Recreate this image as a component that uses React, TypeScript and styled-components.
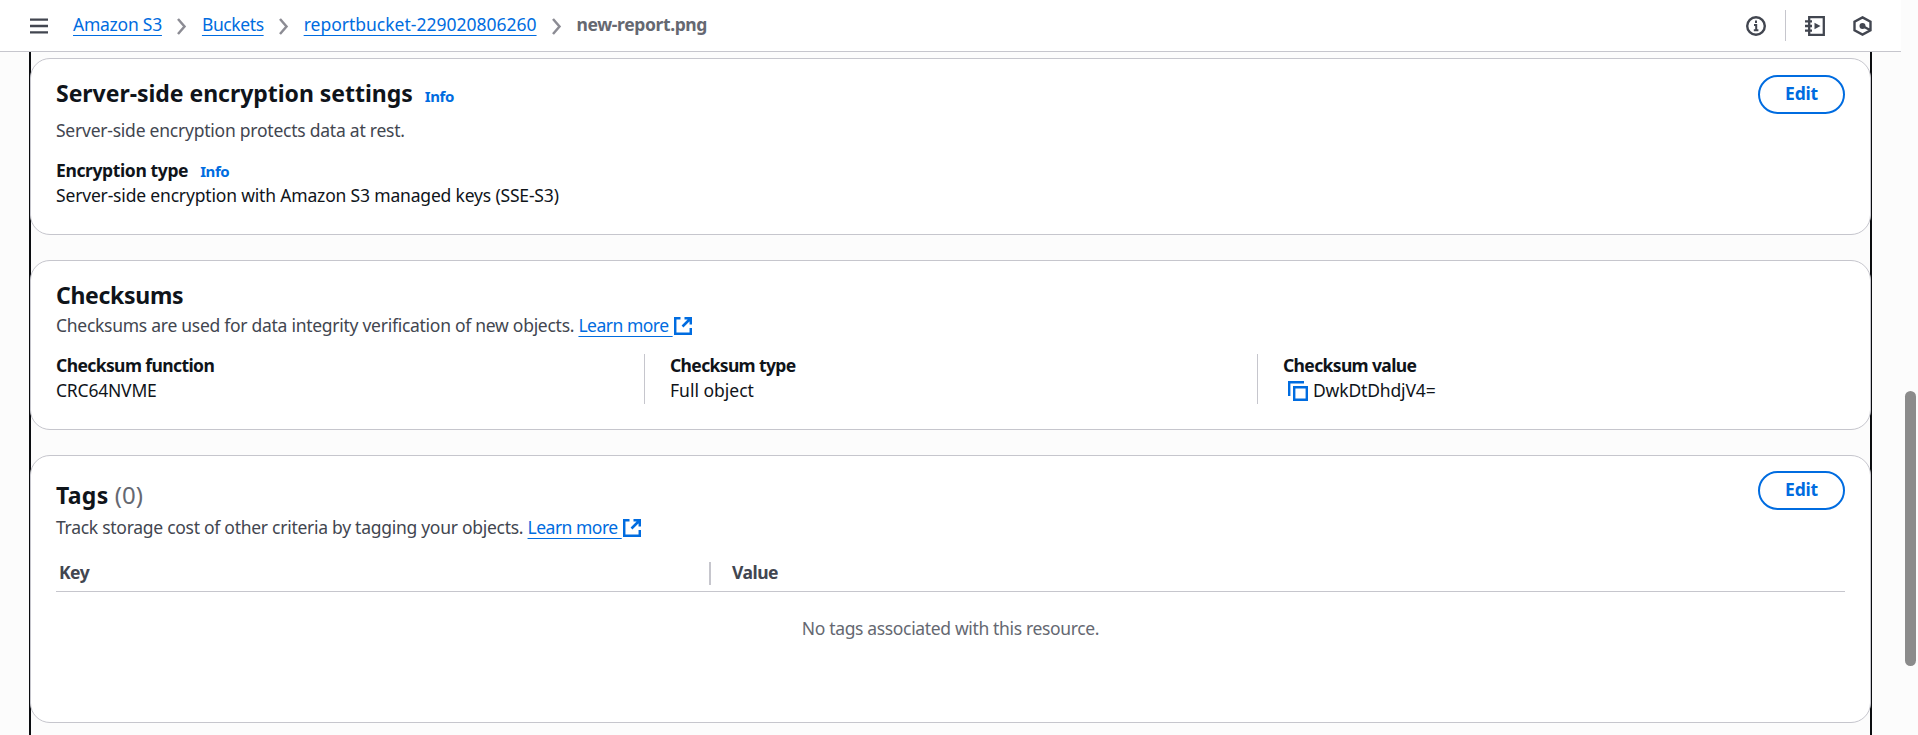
import React from 'react';
import styled, { createGlobalStyle, css } from 'styled-components';

const color = {
  text: '#0f141a',
  secondary: '#424650',
  muted: '#656871',
  link: '#006ce0',
  border: '#c6c6cd',
  page: '#fcfcfc',
};

const GlobalStyle = createGlobalStyle`
  * { box-sizing: border-box; }
  body {
    margin: 0;
    background: ${color.page};
    color: ${color.text};
    font-family: 'Noto Sans', 'Open Sans', sans-serif;
    font-size: 17.5px;
    line-height: 25px;
    overflow: hidden;
  }
`;

const Page = styled.div`
  display: flex;
  height: 735px;
  overflow: hidden;
`;

const Main = styled.div`
  width: 1901px;
  display: flex;
  flex-direction: column;
`;

const ScrollTrack = styled.div`
  width: 17px;
  padding: 391px 2px 0 4px;
`;

const ScrollThumb = styled.div`
  height: 275px;
  border-radius: 6px;
  background: #8b8b8b;
`;

const TopBar = styled.header`
  flex: none;
  height: 52px;
  display: flex;
  align-items: center;
  padding: 0 29px 0 30px;
  background: #fff;
  border-bottom: 1px solid ${color.border};
`;

const MenuIcon = styled.svg`
  flex: none;
  width: 18px;
  height: 20px;
  margin-top: 1px;
`;

const Crumbs = styled.nav`
  display: flex;
  align-items: center;
  margin-left: 25px;
  padding-bottom: 2px;
  flex: 1;
`;

const linkStyle = css`
  color: ${color.link};
  text-decoration: underline;
  text-decoration-thickness: 1px;
  text-underline-offset: 4px;
`;

const Fit = styled.span<{ $ls?: number }>`
  letter-spacing: ${(p) => p.$ls ?? 0}px;
  white-space: nowrap;
`;

const CrumbLink = styled(Fit).attrs({ as: 'a' })`
  ${linkStyle}
`;

const CrumbCurrent = styled(Fit)`
  color: ${color.muted};
  font-weight: 700;
`;

const Chevron = styled.svg`
  flex: none;
  width: 20px;
  height: 24px;
  margin: 2px 10px 0;
`;

const Tools = styled.div`
  display: flex;
  align-items: center;
  color: ${color.secondary};
  svg { margin-top: 1px; }
`;

const Separator = styled.div`
  width: 1px;
  height: 31px;
  margin: 0 19px;
  background: ${color.border};
`;

const HexagonIcon = styled.svg`
  width: 19px;
  height: 20px;
  margin-left: 28px;
`;

const Frame = styled.main`
  flex: 1;
  margin: 0 29px;
  padding: 6px 0 0;
  border: solid #0b0d10;
  border-width: 0 2px;
`;

const Card = styled.section<{ $height: number; $top: number }>`
  height: ${(p) => p.$height}px;
  margin: 0 -1px 25px;
  padding: ${(p) => p.$top}px 25px 0;
  border: 1px solid ${color.border};
  border-radius: 20px;
  background: #fff;
`;

const HeaderRow = styled.div`
  display: flex;
  justify-content: space-between;
  align-items: flex-start;
`;

const TitleBlock = styled.div<{ $top?: number }>`
  padding-top: ${(p) => p.$top ?? 0}px;
`;

const Title = styled.h2`
  margin: 0;
  font-size: 23px;
  line-height: 28px;
  height: 28px;
  font-weight: 700;
  white-space: nowrap;
`;

const Count = styled(Fit)`
  font-size: 24px;
  font-weight: 400;
  color: ${color.muted};
`;

const Info = styled.a`
  margin-left: 12px;
  font-size: 15px;
  line-height: 20px;
  font-weight: 700;
  letter-spacing: -0.4px;
  color: ${color.link};
`;

const Description = styled.p<{ $top: number }>`
  margin: ${(p) => p.$top}px 0 0;
  color: ${color.secondary};
  white-space: nowrap;
`;

const LearnMore = styled(Fit).attrs({ as: 'a', $ls: -0.5 })`
  ${linkStyle}
  svg {
    margin-left: 1px;
    vertical-align: -3px;
  }
`;

const EditButton = styled.button`
  width: 87px;
  height: 39px;
  padding: 0 0 2px;
  border: 2px solid ${color.link};
  border-radius: 20px;
  background: #fff;
  color: ${color.link};
  font: 700 17.5px/25px 'Noto Sans', sans-serif;
  letter-spacing: -0.2px;
`;

const Label = styled.div`
  font-weight: 700;
`;

const Field = styled.div`
  margin-top: 15px;
`;

const Columns = styled.div`
  display: grid;
  grid-template-columns: 588px 613px 1fr;
  height: 50px;
  margin-top: 16px;
`;

const Column = styled.div<{ $divided?: boolean }>`
  ${Label} { margin-top: -1px; }
  ${(p) => p.$divided && css`
    border-left: 1px solid ${color.border};
    padding-left: 25px;
  `}
`;

const CopyValue = styled.div`
  display: flex;
  align-items: center;
  gap: 5px;
  padding-left: 5px;
  svg { margin-top: 1px; }
`;

const TableHead = styled.div`
  display: grid;
  grid-template-columns: 655px 1fr;
  height: 39px;
  padding-top: 9px;
  margin-top: 13px;
  border-bottom: 1px solid ${color.border};
  color: ${color.secondary};
  font-weight: 700;
  letter-spacing: -0.5px;
`;

const HeadCell = styled.div<{ $divided?: boolean }>`
  padding-left: 3px;
  height: 23px;
  line-height: 21px;
  ${(p) => p.$divided && css`
    margin-left: -2px;
    padding-left: 21px;
    border-left: 2px solid ${color.border};
  `}
`;

const Empty = styled.div`
  margin-top: 24px;
  text-align: center;
  color: ${color.muted};
`;

const CrumbSeparator = () => (
  <Chevron viewBox="0 0 20 24" fill="none" stroke="#8c8c94" strokeWidth="2.5">
    <path d="M6 5l6.500 7.500L6 20" />
  </Chevron>
);

const ExternalIcon = () => (
  <svg width="18" height="18" viewBox="0 0 18 18" fill="none" stroke="currentColor" strokeWidth="2.5">
    <path d="M6.500 1.200H1.200v15.600h15.600V11M10.500 1.200h6.300v6.300M16.500 1.500L8.500 9.500" />
  </svg>
);

export default function App() {
  return (
    <>
      <GlobalStyle />
      <Page>
        <Main>
          <TopBar>
            <MenuIcon viewBox="0 0 18 20" fill="none" stroke={color.secondary} strokeWidth="2.4">
              <path d="M0 3.600h18M0 10h18M0 16.400h18" />
            </MenuIcon>
            <Crumbs>
              <CrumbLink $ls={-0.25}>Amazon S3</CrumbLink>
              <CrumbSeparator />
              <CrumbLink $ls={-0.4}>Buckets</CrumbLink>
              <CrumbSeparator />
              <CrumbLink>reportbucket-229020806260</CrumbLink>
              <CrumbSeparator />
              <CrumbCurrent $ls={-0.38}>new-report.png</CrumbCurrent>
            </Crumbs>
            <Tools>
              <svg width="20" height="20" viewBox="0 0 20 20" fill="none" stroke="currentColor" strokeWidth="2.4">
                <circle cx="10" cy="10" r="8.8" />
                <path d="M8 9h2.200v5.500M7.800 14.300h4.600M10 4.600v2.400" strokeWidth="2" />
              </svg>
              <Separator />
              <svg width="20" height="20" viewBox="0 0 20 20" fill="none" stroke="currentColor" strokeWidth="2.3">
                <path d="M4.200 1.200h14.600v17.600H4.200zM0 5.300h7M0 10h7M0 14.700h7" />
                <path d="M9.500 6.700v6.600l6-3.300z" fill="currentColor" stroke="none" />
              </svg>
              <HexagonIcon viewBox="0 0 19 20" fill="none" stroke="currentColor" strokeWidth="2.4">
                <path d="M9.500 1.400l8 4.300v8.600l-8 4.300-8-4.300V5.700zM9.500 10l7.500 4" />
                <circle cx="9.500" cy="10" r="3" fill="currentColor" stroke="none" />
              </HexagonIcon>
            </Tools>
          </TopBar>
          <Frame>
            <Card $height={177} $top={16}>
              <HeaderRow>
                <TitleBlock $top={4}>
                  <Title><Fit $ls={-0.03}>Server-side encryption settings</Fit><Info>Info</Info></Title>
                  <Description $top={11}><Fit $ls={-0.235}>Server-side encryption protects data at rest.</Fit></Description>
                </TitleBlock>
                <EditButton>Edit</EditButton>
              </HeaderRow>
              <Field>
                <Label><Fit $ls={-0.38}>Encryption type</Fit><Info>Info</Info></Label>
                <Fit $ls={-0.175}>Server-side encryption with Amazon S3 managed keys (SSE-S3)</Fit>
              </Field>
            </Card>
            <Card $height={170} $top={20}>
              <Title><Fit $ls={-0.3}>Checksums</Fit></Title>
              <Description $top={4}>
                <Fit $ls={-0.275}>Checksums are used for data integrity verification of new objects. </Fit>
                <LearnMore>Learn more <ExternalIcon /></LearnMore>
              </Description>
              <Columns>
                <Column><Label><Fit $ls={-0.6}>Checksum function</Fit></Label><Fit $ls={-0.2}>CRC64NVME</Fit></Column>
                <Column $divided><Label><Fit $ls={-0.64}>Checksum type</Fit></Label><Fit>Full object</Fit></Column>
                <Column $divided>
                  <Label><Fit $ls={-0.64}>Checksum value</Fit></Label>
                  <CopyValue>
                    <svg width="20" height="20" viewBox="0 0 20 20" fill="none" stroke={color.link} strokeWidth="2.4">
                      <path d="M1.200 15V1.200H16M6.200 6.200h12.600v12.600H6.200z" />
                    </svg>
                    <Fit $ls={-0.15}>DwkDtDhdjV4=</Fit>
                  </CopyValue>
                </Column>
              </Columns>
            </Card>
            <Card $height={268} $top={15}>
              <HeaderRow>
                <TitleBlock $top={10}>
                  <Title><Fit $ls={0.3}>Tags </Fit><Count>(0)</Count></Title>
                  <Description $top={6}>
                    <Fit $ls={-0.275}>Track storage cost of other criteria by tagging your objects. </Fit>
                    <LearnMore>Learn more <ExternalIcon /></LearnMore>
                  </Description>
                </TitleBlock>
                <EditButton>Edit</EditButton>
              </HeaderRow>
              <TableHead>
                <HeadCell>Key</HeadCell>
                <HeadCell $divided>Value</HeadCell>
              </TableHead>
              <Empty><Fit $ls={-0.35}>No tags associated with this resource.</Fit></Empty>
            </Card>
          </Frame>
        </Main>
        <ScrollTrack><ScrollThumb /></ScrollTrack>
      </Page>
    </>
  );
}
